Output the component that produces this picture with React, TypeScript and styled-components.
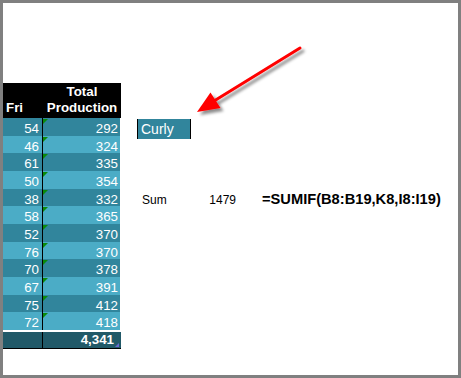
import styled, {createGlobalStyle} from "styled-components";

const rows = [
  {fri: 54, total: 292},
  {fri: 46, total: 324},
  {fri: 61, total: 335},
  {fri: 50, total: 354},
  {fri: 38, total: 332},
  {fri: 58, total: 365},
  {fri: 52, total: 370},
  {fri: 76, total: 370},
  {fri: 70, total: 378},
  {fri: 67, total: 391},
  {fri: 75, total: 412},
  {fri: 72, total: 418},
];

export default function App() {
  return (
    <>
      <GlobalStyle />
      <Frame>
        <Sheet>
          <Table>
            <Header>
              <HeadCell $align="left">Fri</HeadCell>
              <HeadCell $align="center">
                <span>Total</span>
                <span>Production</span>
              </HeadCell>
            </Header>
            {rows.map((row, i) => (
              <Row key={i} $dark={i % 2 === 0}>
                <FriCell>{row.fri}</FriCell>
                <TotalCell>{row.total}</TotalCell>
              </Row>
            ))}
            <TotalRow>
              <FriCell />
              <GrandCell>4,341</GrandCell>
            </TotalRow>
          </Table>
          <Side>
            <Curly>Curly</Curly>
            <SumRow>
              <SumLabel>Sum</SumLabel>
              <SumValue>1479</SumValue>
              <Formula>=SUMIF(B8:B19,K8,I8:I19)</Formula>
            </SumRow>
          </Side>
        </Sheet>
        <Arrow width="461" height="378" viewBox="0 0 461 378">
          <defs>
            <filter id="shadow" x="-20%" y="-20%" width="140%" height="140%">
              <feDropShadow dx="3" dy="3" stdDeviation="1.5" floodColor="#000" floodOpacity="0.45" />
            </filter>
          </defs>
          <g filter="url(#shadow)">
            <line x1="300" y1="48" x2="214" y2="101" stroke="#ff0000" strokeWidth="3" strokeLinecap="round" />
            <polygon points="197,112 210.5,92.5 220.5,108" fill="#ff0000" />
          </g>
        </Arrow>
      </Frame>
    </>
  );
}

const GlobalStyle = createGlobalStyle`
  html, body {
    margin: 0;
    padding: 0;
    background: #ffffff;
  }
  body {
    font-family: "Liberation Sans", Arial, sans-serif;
  }
`;

const Frame = styled.div`
  position: relative;
  box-sizing: border-box;
  width: 461px;
  height: 378px;
  border: 3px solid #808080;
  background: #ffffff;
  overflow: hidden;
`;

const Sheet = styled.div`
  display: flex;
  align-items: flex-start;
  padding-top: 80px;
  gap: 16px;
`;

const Table = styled.div`
  display: flex;
  flex-direction: column;
  width: 118px;
  font-size: 13.33px;
  color: #ffffff;
`;

const Header = styled.div`
  display: flex;
  height: 35px;
  background: #000000;
  font-weight: bold;
  line-height: 16px;
`;

const HeadCell = styled.div<{$align: "left" | "center"}>`
  display: flex;
  flex-direction: column;
  justify-content: flex-end;
  align-items: ${(p) => (p.$align === "left" ? "flex-start" : "center")};
  box-sizing: border-box;
  width: ${(p) => (p.$align === "left" ? "40px" : "78px")};
  padding: 0 0 2px ${(p) => (p.$align === "left" ? "3px" : "0")};
`;

const Row = styled.div<{$dark: boolean}>`
  display: flex;
  width: 117px;
  height: 17.67px;
  background: ${(p) => (p.$dark ? "#31859c" : "#4bacc6")};
`;

const FriCell = styled.div`
  box-sizing: border-box;
  width: 40px;
  height: 100%;
  border-right: 1px solid #000000;
  padding: 3px 3px 0 0;
  line-height: 15px;
  text-align: right;
`;

const TotalCell = styled.div`
  position: relative;
  box-sizing: border-box;
  flex: 1;
  padding: 3px 2px 0 0;
  line-height: 15px;
  text-align: right;

  &::before {
    content: "";
    position: absolute;
    left: 0;
    top: 1px;
    border-top: 5px solid #0a8a0a;
    border-right: 5px solid transparent;
  }
`;

const TotalRow = styled.div`
  display: flex;
  width: 118px;
  height: 16px;
  margin-top: 2px;
  background: #215968;
  border-bottom: 1px solid #000000;
`;

const GrandCell = styled.div`
  position: relative;
  box-sizing: border-box;
  flex: 1;
  padding: 1px 7px 0 0;
  line-height: 14px;
  font-weight: bold;
  text-align: right;

  &::after {
    content: "";
    position: absolute;
    right: 2px;
    bottom: 1px;
    border-bottom: 4px solid #6a6ad0;
    border-left: 4px solid transparent;
  }
`;

const Side = styled.div`
  display: flex;
  flex-direction: column;
  padding-top: 36px;
`;

const Curly = styled.div`
  box-sizing: border-box;
  width: 54px;
  height: 20px;
  padding: 2px 0 0 3px;
  background: #31859c;
  border-left: 1px solid #000000;
  border-right: 1px solid #000000;
  color: #ffffff;
  font-size: 14px;
  line-height: 16px;
`;

const SumRow = styled.div`
  display: flex;
  align-items: baseline;
  margin-top: 52px;
  line-height: 17px;
  color: #000000;
`;

const SumLabel = styled.span`
  box-sizing: border-box;
  width: 64px;
  padding-left: 5px;
  font-size: 12px;
`;

const SumValue = styled.span`
  box-sizing: border-box;
  width: 35px;
  text-align: right;
  font-size: 12px;
`;

const Formula = styled.span`
  margin-left: 26px;
  font-size: 14.67px;
  font-weight: bold;
  white-space: nowrap;
`;

const Arrow = styled.svg`
  position: absolute;
  left: -3px;
  top: -3px;
  pointer-events: none;
`;
